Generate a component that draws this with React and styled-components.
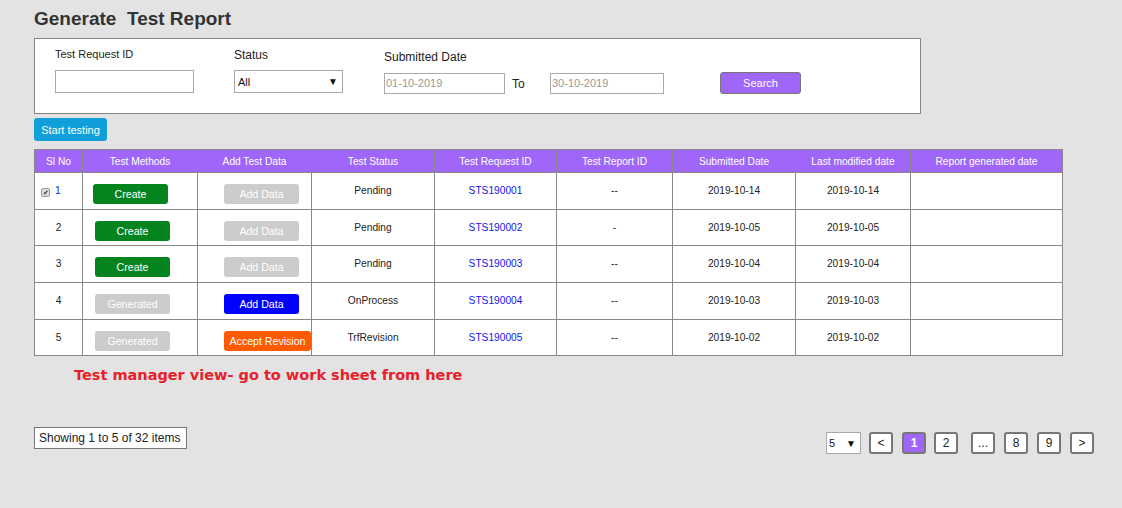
import styled, { createGlobalStyle } from 'styled-components';

const GlobalStyle = createGlobalStyle`
  html, body {
    margin: 0;
    padding: 0;
    background: #e3e3e3;
    font-family: "Liberation Sans", Arial, sans-serif;
    color: #333;
  }
`;

const Page = styled.div`
  width: 1122px;
  height: 508px;
  padding: 8px 0 0 34px;
  box-sizing: border-box;
`;

const Title = styled.h1`
  margin: 0;
  font-size: 19px;
  font-weight: bold;
  color: #333;
  white-space: pre;
  line-height: 22px;
`;

const FilterPanel = styled.div`
  margin-top: 8px;
  width: 887px;
  height: 76px;
  box-sizing: border-box;
  border: 1px solid #858585;
  background: #fff;
  display: flex;
  align-items: flex-start;
  padding-left: 20px;
`;

const Field = styled.div`
  display: flex;
  flex-direction: column;
  margin-top: ${(p) => p.top}px;
  margin-right: ${(p) => p.gap || 0}px;
`;

const Label = styled.div`
  font-size: ${(p) => p.size || 12}px;
  color: #222;
  height: ${(p) => p.h}px;
`;

const TextBox = styled.div`
  width: ${(p) => p.w}px;
  height: ${(p) => p.h || 23}px;
  box-sizing: border-box;
  border: 1px solid #a9a9a9;
  background: #fff;
  font-size: 11px;
  color: #999;
  display: flex;
  align-items: center;
  padding: 0 1px;
`;

const SelectBox = styled(TextBox)`
  color: #111;
  justify-content: space-between;
  padding: 0 4px 0 3px;
`;

const Arrow = styled.span`
  font-size: 10px;
  color: #111;
`;

const DateRow = styled.div`
  display: flex;
  align-items: center;
`;

const ToText = styled.span`
  font-size: 12px;
  color: #222;
  width: 45px;
  padding-left: 7px;
  box-sizing: border-box;
  margin-top: 2px;
`;

const SearchButton = styled.button`
  margin-left: 56px;
  width: 81px;
  height: 22px;
  background: #a066fa;
  border: 1px solid #777;
  border-radius: 3px;
  color: #fff;
  font-family: inherit;
  font-size: 11px;
  padding: 0;
`;

const StartButton = styled.button`
  margin-top: 4px;
  width: 73px;
  height: 23px;
  background: #109fd9;
  border: none;
  border-radius: 3px;
  color: #fff;
  font-family: inherit;
  font-size: 11px;
  padding: 0;
  display: block;
`;

const Table = styled.table`
  margin-top: 8px;
  border-collapse: collapse;
  width: 1028px;
  table-layout: fixed;
  background: #fff;
  font-size: 10.2px;
`;

const Th = styled.th`
  background: #a066fa;
  color: #fff;
  font-weight: normal;
  height: 22px;
  border: 1px solid #888;
  padding: 0;
  font-size: 10.2px;
`;

const Td = styled.td`
  border: 1px solid #888;
  height: ${(p) => p.h}px;
  box-sizing: border-box;
  vertical-align: top;
  padding: 11px 0 0 ${(p) => p.pl || 0}px;
  text-align: ${(p) => (p.left ? 'left' : 'center')};
  color: #222;
  line-height: 13px;
`;

const ActionButton = styled.button`
  width: ${(p) => p.w || 75}px;
  height: 20px;
  border: none;
  border-radius: 3px;
  color: #fff;
  font-family: inherit;
  font-size: 10.6px;
  padding: 0;
  background: ${(p) => p.bg};
`;

const Check = styled.span`
  display: inline-flex;
  align-items: center;
  justify-content: center;
  width: 9px;
  height: 9px;
  box-sizing: border-box;
  border: 1px solid #9a9a9a;
  border-radius: 2px;
  background: #dcdcdc;
  color: #333;
  font-size: 7px;
  line-height: 1;
  margin-right: 5px;
  vertical-align: -1px;
`;

const RequestLink = styled.span`
  color: #1515ee;
`;

const Note = styled.div`
  margin: 11px 0 0 40px;
  font-family: "DejaVu Sans", Verdana, sans-serif;
  font-weight: bold;
  font-size: 14.5px;
  color: #e8202a;
`;

const Footer = styled.div`
  display: flex;
  justify-content: space-between;
  align-items: flex-start;
  margin-top: 44px;
  width: 1060px;
`;

const Showing = styled.div`
  width: 153px;
  height: 22px;
  box-sizing: border-box;
  border: 1px solid #777;
  background: #fff;
  font-size: 12px;
  color: #222;
  padding: 3px 0 0 4px;
`;

const Pager = styled.div`
  display: flex;
  align-items: center;
  margin-top: 5px;
`;

const PageSize = styled(SelectBox)`
  height: 22px;
  margin-right: 8px;
  padding: 0 4px 0 2px;
`;

const PageButton = styled.div`
  width: 24px;
  height: 22px;
  box-sizing: border-box;
  border: 2px solid #777;
  border-radius: 3px;
  background: ${(p) => (p.active ? '#a066fa' : '#fff')};
  color: ${(p) => (p.active ? '#fff' : '#222')};
  font-weight: ${(p) => (p.active ? 'bold' : 'normal')};
  font-size: 12px;
  display: flex;
  align-items: center;
  justify-content: center;
  margin-left: ${(p) => p.ml ?? 9}px;
`;

const rows = [
  { no: 1, method: 'Create', data: 'Add Data', status: 'Pending', id: 'STS190001', rep: '--', sub: '2019-10-14', mod: '2019-10-14', check: true, pl: 10, h: 37 },
  { no: 2, method: 'Create', data: 'Add Data', status: 'Pending', id: 'STS190002', rep: '-', sub: '2019-10-05', mod: '2019-10-05', pl: 12, h: 36 },
  { no: 3, method: 'Create', data: 'Add Data', status: 'Pending', id: 'STS190003', rep: '--', sub: '2019-10-04', mod: '2019-10-04', pl: 12, h: 37 },
  { no: 4, method: 'Generated', data: 'Add Data', status: 'OnProcess', id: 'STS190004', rep: '--', sub: '2019-10-03', mod: '2019-10-03', pl: 12, h: 37, active: true },
  { no: 5, method: 'Generated', data: 'Accept Revision', status: 'TrfRevision', id: 'STS190005', rep: '--', sub: '2019-10-02', mod: '2019-10-02', pl: 12, h: 36, revision: true },
];

const columns = [
  ['Sl No', 48],
  ['Test Methods', 115],
  ['Add Test Data', 114],
  ['Test Status', 123],
  ['Test Request ID', 122],
  ['Test Report ID', 116],
  ['Submitted Date', 123],
  ['Last modified date', 115],
  ['Report generated date', 152],
];

function dataColor(r) {
  if (r.revision) return '#ff5a00';
  if (r.active) return '#0000ff';
  return '#cccccc';
}

function App() {
  return (
    <Page>
      <GlobalStyle />
      <Title>Generate  Test Report</Title>
      <FilterPanel>
        <Field top={9} gap={40}>
          <Label size={11} h={22}>Test Request ID</Label>
          <TextBox w={139} />
        </Field>
        <Field top={9} gap={41}>
          <Label h={22}>Status</Label>
          <SelectBox w={109}>
            All <Arrow>▼</Arrow>
          </SelectBox>
        </Field>
        <Field top={11}>
          <Label h={22}>Submitted Date</Label>
          <DateRow>
            <TextBox w={121} h={21}>01-10-2019</TextBox>
            <ToText>To</ToText>
            <TextBox w={114} h={21}>30-10-2019</TextBox>
            <SearchButton>Search</SearchButton>
          </DateRow>
        </Field>
      </FilterPanel>
      <StartButton>Start testing</StartButton>
      <Table>
        <colgroup>
          {columns.map(([name, w]) => (
            <col key={name} style={{ width: w }} />
          ))}
        </colgroup>
        <thead>
          <tr>
            {columns.map(([name]) => (
              <Th key={name}>{name}</Th>
            ))}
          </tr>
        </thead>
        <tbody>
          {rows.map((r) => (
            <tr key={r.no}>
              {r.check ? (
                <Td h={r.h} left pl={6}>
                  <Check>✔</Check>
                  <RequestLink>{r.no}</RequestLink>
                </Td>
              ) : (
                <Td h={r.h}>{r.no}</Td>
              )}
              <Td h={r.h} left pl={r.pl}>
                <ActionButton bg={r.method === 'Create' ? '#04841f' : '#cccccc'}>{r.method}</ActionButton>
              </Td>
              <Td h={r.h} left pl={26}>
                <ActionButton bg={dataColor(r)} w={r.revision ? 87 : 75}>
                  {r.data}
                </ActionButton>
              </Td>
              <Td h={r.h}>{r.status}</Td>
              <Td h={r.h}>
                <RequestLink>{r.id}</RequestLink>
              </Td>
              <Td h={r.h}>{r.rep}</Td>
              <Td h={r.h}>{r.sub}</Td>
              <Td h={r.h}>{r.mod}</Td>
              <Td h={r.h} />
            </tr>
          ))}
        </tbody>
      </Table>
      <Note>Test manager view- go to work sheet from here</Note>
      <Footer>
        <Showing>Showing 1 to 5 of 32 items</Showing>
        <Pager>
          <PageSize w={35}>
            5 <Arrow>▼</Arrow>
          </PageSize>
          <PageButton ml={0}>&lt;</PageButton>
          <PageButton active>1</PageButton>
          <PageButton ml={8}>2</PageButton>
          <PageButton ml={13}>...</PageButton>
          <PageButton>8</PageButton>
          <PageButton>9</PageButton>
          <PageButton>&gt;</PageButton>
        </Pager>
      </Footer>
    </Page>
  );
}

export default App;
